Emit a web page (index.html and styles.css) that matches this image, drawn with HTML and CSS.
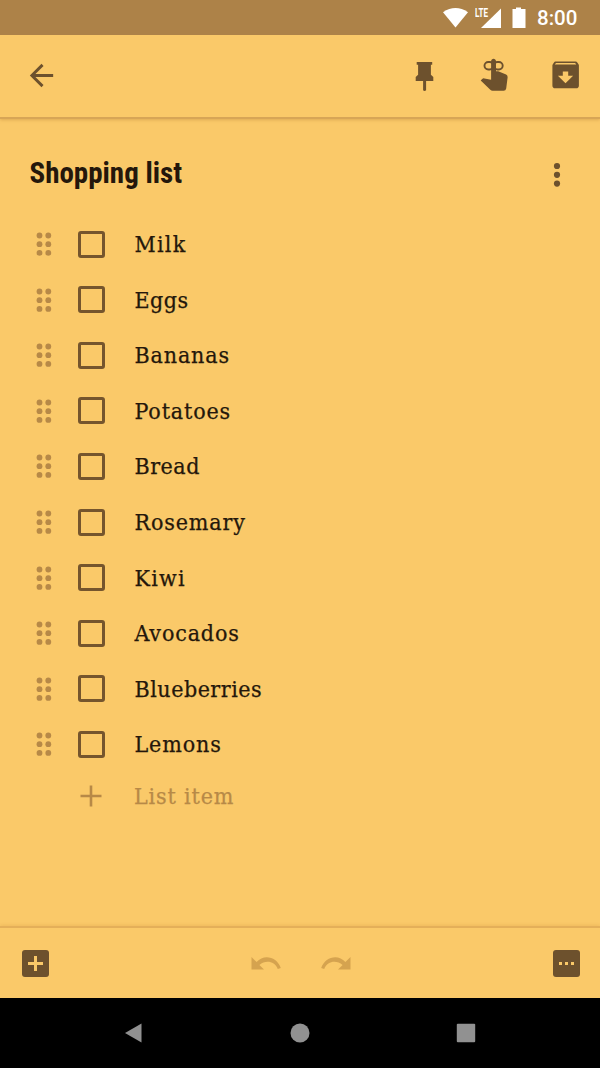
FILE: index.html
```html
<!DOCTYPE html>
<html lang="en">
<head>
<meta charset="utf-8">
<title>Shopping list</title>
<link rel="stylesheet" href="styles.css">
</head>
<body>
<svg class="defs" width="0" height="0">
  <symbol id="handle" viewBox="0 0 16 24"><circle cx="3.5" cy="3.5" r="2.900"/><circle cx="12.3" cy="3.5" r="2.900"/><circle cx="3.5" cy="12.2" r="2.900"/><circle cx="12.3" cy="12.2" r="2.900"/><circle cx="3.5" cy="20.9" r="2.900"/><circle cx="12.3" cy="20.9" r="2.900"/></symbol>
</svg>
<div class="screen">
  <header class="status">
    <svg class="signals" viewBox="0 0 90 26"><path d="M0 5.2Q12.5-3 25 5.2L12.5 20.5Z"/><path d="M58 1.5V21H38Z"/><path d="M73 .500h5V2h4.500v19h-13V2H73Z"/></svg>
    <span class="lte">LTE</span>
    <time class="clock">8:00</time>
  </header>
  <nav class="toolbar">
    <svg class="back" viewBox="0 0 24 24"><path d="M20 11H7.83l5.59-5.59L12 4l-8 8 8 8 1.41-1.41L7.83 13H20z"/></svg>
    <svg class="tool" viewBox="0 0 35 35"><path d="M10.700 4h15.500v2.800h-1.300v10l2.400 2.300v3.800h-7.200v9.300q-1.600 1.500-3 0v-9.300H9.700v-3.800l2.400-2.300v-10h-1.400z"/></svg>
    <svg class="tool" viewBox="0 0 35 35"><path d="M14.100 3.300c0-3.500 4.900-3.500 4.900 0v9.900h2.200l7.900 3.400q1.700 1 1.500 2.800l-1.400 11q-.4 2.300-2.600 2.300H15.600q-1.300 0-2.300-.9L3.700 22.400l1.500-1.500q.9-.7 2.200-.5l6.700 1.400z"/><g class="ring"><rect x="7.500" y="4" width="9" height="7.500" rx="3.750"/><rect x="16.700" y="4" width="9" height="7.500" rx="3.750"/></g></svg>
    <svg class="tool" viewBox="0 0 35 35"><path fill-rule="evenodd" d="M7.400 3.600h20.300q1 0 1.600.9l1.200 1.800q.4.600.4 1.300v19.800q0 2.800-2.800 2.800H7.200q-2.800 0-2.800-2.800V7.600q0-.7.4-1.300L6 4.500q.5-.9 1.400-.9zM8 5 6.800 6.500h21.500L27.100 5zM14.800 13.600v4.200H9.900l7.600 7.500 7.600-7.500h-4.900v-4.200z"/></svg>
  </nav>
  <main class="note">
    <div class="heading">
      <h1 class="title">Shopping list</h1>
      <svg class="more" viewBox="0 0 8 26"><circle cx="4" cy="4" r="3.100"/><circle cx="4" cy="12.800" r="3.100"/><circle cx="4" cy="21.600" r="3.100"/></svg>
    </div>
    <ul class="items">
      <li class="item"><svg class="handle"><use href="#handle"/></svg><span class="box"></span><span class="label loose">Milk</span></li>
      <li class="item"><svg class="handle"><use href="#handle"/></svg><span class="box"></span><span class="label tight">Eggs</span></li>
      <li class="item"><svg class="handle"><use href="#handle"/></svg><span class="box"></span><span class="label">Bananas</span></li>
      <li class="item"><svg class="handle"><use href="#handle"/></svg><span class="box"></span><span class="label">Potatoes</span></li>
      <li class="item"><svg class="handle"><use href="#handle"/></svg><span class="box"></span><span class="label tight">Bread</span></li>
      <li class="item"><svg class="handle"><use href="#handle"/></svg><span class="box"></span><span class="label">Rosemary</span></li>
      <li class="item"><svg class="handle"><use href="#handle"/></svg><span class="box"></span><span class="label loose">Kiwi</span></li>
      <li class="item"><svg class="handle"><use href="#handle"/></svg><span class="box"></span><span class="label">Avocados</span></li>
      <li class="item"><svg class="handle"><use href="#handle"/></svg><span class="box"></span><span class="label tight">Blueberries</span></li>
      <li class="item"><svg class="handle"><use href="#handle"/></svg><span class="box"></span><span class="label">Lemons</span></li>
    </ul>
    <div class="add"><svg class="plus" viewBox="0 0 22 22"><path d="M11 .500v21M.500 11h21"/></svg><span class="label">List item</span></div>
  </main>
  <footer class="actions">
    <svg class="square" viewBox="0 0 27 27"><rect width="27" height="27" rx="3"/><path class="cut" d="M13.500 6v15M6 13.500h15"/></svg>
    <div class="history">
      <svg class="arrow" viewBox="0 0 30 14"><path d="M.500 1v12.500H13L8.400 8.900C14.500 4 23.500 4.800 26.800 13l3-1C26 1 13-2.500 5.600 6.100z"/></svg>
      <svg class="arrow flip" viewBox="0 0 30 14"><path d="M.500 1v12.500H13L8.400 8.900C14.500 4 23.500 4.800 26.800 13l3-1C26 1 13-2.500 5.600 6.100z"/></svg>
    </div>
    <svg class="square" viewBox="0 0 27 27"><rect width="27" height="27" rx="3"/><path class="dots" d="M6 12h3v3H6zM12 12h3v3h-3zM18 12h3v3h-3z"/></svg>
  </footer>
  <div class="system">
    <svg viewBox="0 0 20 20"><path d="M1 10 17.500.500v19z"/></svg>
    <svg viewBox="0 0 20 20"><circle cx="10" cy="10" r="9.500"/></svg>
    <svg viewBox="0 0 20 20"><rect x=".800" y=".800" width="18.400" height="18.400" rx="1"/></svg>
  </div>
</div>
</body>
</html>
```
FILE: styles.css
```css
* { box-sizing: border-box; }
body { margin: 0; }
svg { display: block; flex: none; }
.defs { position: absolute; }
.screen {
  width: 600px; height: 1068px; display: flex; flex-direction: column; overflow: hidden;
  background: #fac969; color: #24170b; fill: #6d512d; font-family: Roboto, sans-serif;
}
.status {
  position: relative; flex: none; height: 35px; padding: 0 22px 0 443px;
  display: flex; align-items: center; background: #ad8248; color: #fff;
}
.signals { width: 90px; height: 26px; fill: #fff; margin-top: 4px; }
.lte { position: absolute; left: 475px; top: 6px; font-size: 13px; line-height: 13px; font-weight: 700; transform: scaleX(.62); transform-origin: left; }
.clock { margin-left: 4px; font-size: 20.500px; font-weight: 500; line-height: 35px; margin-top: 2px; white-space: nowrap; }
.toolbar {
  flex: none; height: 84px; padding: 0 17px 1px 24px; display: flex; align-items: center;
  border-bottom: 2px solid #d7a556; box-shadow: 0 1px 3px #c88e4088;
}
.back { width: 35px; height: 35px; margin-right: auto; }
.tool { width: 35px; height: 35px; margin-left: 36px; }
.ring { fill: none; stroke: #6d512d; stroke-width: 1.9; }
.note { flex: 1; padding-top: 26px; }
.heading { height: 71.300px; padding: 0 39px 0 29.500px; display: flex; justify-content: space-between; }
.title { margin: 10px 0 0; font: 700 29px/36px "Roboto Condensed", Roboto, sans-serif; white-space: nowrap; }
.more { width: 8px; height: 26px; margin-top: 17px; }
.items { list-style: none; margin: 0; padding: 0; display: grid; grid-auto-rows: 55.600px; }
.item, .add { display: flex; align-items: center; }
.item { padding-left: 36px; }
.handle { width: 16px; height: 24px; fill: #b78947; }
.box { width: 27px; height: 27px; margin: 0 30px 0 25.500px; border: 3px solid #75552d; border-radius: 3px; }
.label {
  font: 23px/32px "Roboto Slab", "DejaVu Serif Condensed", "DejaVu Serif", serif; white-space: nowrap;
  letter-spacing: .850px; -webkit-text-stroke: .250px currentColor;
}
.tight { letter-spacing: .500px; }
.loose { letter-spacing: 1.250px; }
.add { height: 48px; padding-left: 80px; color: #b78947; }
.plus { width: 22px; height: 22px; margin-right: 32px; stroke: #b78947; stroke-width: 2.600; }
.actions {
  flex: none; height: 72px; padding: 0 20px 0 22px; display: flex; align-items: center; justify-content: space-between;
  border-top: 2px solid #e4af59; box-shadow: 0 -1px 3px #d99b4555;
}
.square { width: 27px; height: 27px; }
.cut { stroke: #fac969; stroke-width: 3; }
.dots { fill: #fac969; }
.history { display: flex; gap: 40px; fill: #d5a34f; }
.arrow { width: 30px; height: 14px; }
.flip { transform: scaleX(-1); }
.system { flex: none; height: 70px; background: #000; fill: #919191; display: flex; align-items: center; justify-content: center; gap: 146px; }
.system svg { width: 20px; height: 20px; }
```
